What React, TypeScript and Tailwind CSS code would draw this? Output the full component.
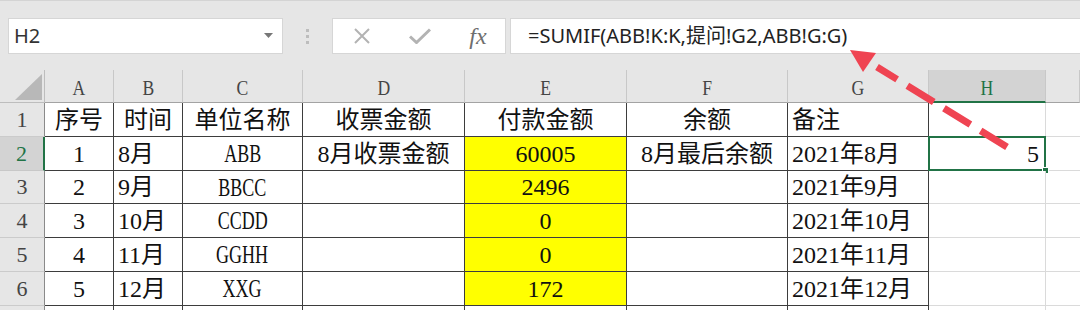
import React from 'react';

const colWidths = 'grid-cols-[45px_69px_69px_120px_162px_162px_161px_141px_117px_1fr]';
const letters = ['A', 'B', 'C', 'D', 'E', 'F', 'G', 'H', ''];

const rows = [
    ['序号', '时间', '单位名称', '收票金额', '付款金额', '余额', '备注'],
    ['1', '8月', 'ABB', '8月收票金额', '60005', '8月最后余额', '2021年8月'],
    ['2', '9月', 'BBCC', '', '2496', '', '2021年9月'],
    ['3', '10月', 'CCDD', '', '0', '', '2021年10月'],
    ['4', '11月', 'GGHH', '', '0', '', '2021年11月'],
    ['5', '12月', 'XXG', '', '172', '', '2021年12月'],
];

// left aligned columns (B, G) except header of B
const alignFor = (row: number, col: number) => {
    if (col === 6) return 'justify-start pl-[4px]';
    if (col === 1 && row > 0) return 'justify-start pl-[4px]';
    return 'justify-center';
};

const CellText = ({ text }: { text: string }) => {
    if (/^[A-Z]+$/.test(text)) {
        return <span className="inline-block scale-x-[0.72] text-[25px]">{text}</span>;
    }
    return <span>{text}</span>;
};

const Toolbar = () => (
    <div className="h-[70px] border-t border-[#d4d4d4] pt-[17px] font-['Noto_Sans','Noto_Sans_CJK_SC',sans-serif]">
        <div className="flex items-start h-[36px]">
            {/* Name box */}
            <div className="ml-[8px] w-[275px] h-[36px] bg-white border border-[#d6d6d6] flex items-center pl-[5px] pr-[9px]">
                <span className="text-[20px] text-[#333] flex-1">H2</span>
                <svg width="9" height="6" viewBox="0 0 9 6">
                    <polygon points="0,0 9,0 4.5,5" fill="#777" />
                </svg>
            </div>

            {/* Divider dots */}
            <div className="w-[49px] h-[36px] flex flex-col items-center justify-center gap-[3px]">
                <div className="w-[3px] h-[3px] bg-[#bdbdbd]" />
                <div className="w-[3px] h-[3px] bg-[#bdbdbd]" />
                <div className="w-[3px] h-[3px] bg-[#bdbdbd]" />
            </div>

            {/* Cancel / enter / fx */}
            <div className="w-[174px] h-[36px] bg-white border border-[#d6d6d6] flex items-center">
                <div className="w-[56px] flex justify-center pl-[1px]">
                    <svg width="18" height="16" viewBox="0 0 18 16">
                        <path d="M2 1 L16 15 M16 1 L2 15" stroke="#b3b3b3" strokeWidth="2" />
                    </svg>
                </div>
                <div className="w-[62px] flex justify-center">
                    <svg width="22" height="16" viewBox="0 0 22 16">
                        <path d="M1 8.5 L7.5 14.5 L21 1.5" stroke="#b3b3b3" strokeWidth="3" fill="none" />
                    </svg>
                </div>
                <div className="flex-1 flex justify-center">
                    <span className="font-['Liberation_Serif',serif] italic text-[24px] text-[#6e6e6e] leading-none">fx</span>
                </div>
            </div>

            {/* Formula input */}
            <div className="ml-[4px] flex-1 h-[36px] bg-white border-y border-l border-[#d6d6d6] flex items-center pl-[17px]">
                <span className="text-[20px] text-[#222] whitespace-nowrap">=SUMIF(ABB!K:K,提问!G2,ABB!G:G)</span>
            </div>
        </div>
    </div>
);

const Sheet = () => (
    <div
        className={`grid ${colWidths} grid-rows-[33px_34px_34px_33px_34px_34px_34px_34px] font-['Liberation_Serif','Noto_Sans_CJK_SC',serif] text-[24px] leading-none text-[#111]`}
    >
        {/* Select-all corner */}
        <div className="border-r border-b border-[#bdbdbd] bg-[#e6e6e6]">
            <svg width="45" height="33" viewBox="0 0 45 33">
                <polygon points="42,4 15,30 42,30" fill="#b8b8b8" />
            </svg>
        </div>

        {/* Column letters */}
        {letters.map((l, i) =>
            l === 'H' ? (
                <div key={i} className="bg-[#d3d3d3] border-r border-[#c8c8c8] border-b-2 border-b-[#217346] flex items-center justify-center pt-[4px] text-[#217346] text-[22px]">
                    <span className="inline-block scale-x-[0.8]">{l}</span>
                </div>
            ) : (
                <div key={i} className="bg-[#e6e6e6] border-r border-b border-r-[#c8c8c8] border-b-[#a3a3a3] flex items-center justify-center pt-[4px] text-[#444] text-[22px]">
                    <span className="inline-block scale-x-[0.8]">{l}</span>
                </div>
            )
        )}

        {[...rows, []].map((row, r) => (
            <React.Fragment key={r}>
                {/* Row number */}
                {r === 1 ? (
                    <div className="bg-[#d3d3d3] border-b border-b-[#c8c8c8] border-r-2 border-r-[#217346] flex items-center justify-center text-[22px] text-[#217346]">
                        {r + 1}
                    </div>
                ) : (
                    <div className="bg-[#e6e6e6] border-b border-r border-b-[#cbcbcb] border-r-[#8a8a8a] flex items-center justify-center text-[22px] text-[#444]">
                        {r < rows.length ? r + 1 : ''}
                    </div>
                )}

                {/* A..G */}
                {Array.from({ length: 7 }).map((_, c) => {
                    const text = row[c] ?? '';
                    const yellow = c === 4 && r >= 1 && r <= 5;
                    const inTable = r <= 5;
                    return (
                        <div
                            key={c}
                            className={`border-r border-b flex items-center whitespace-nowrap overflow-hidden ${
                                inTable ? 'border-[#3d3d3d]' : 'border-r-[#3d3d3d] border-b-[#d9d9d9]'
                            } ${yellow ? 'bg-[#ffff00]' : 'bg-white'} ${alignFor(r, c)}`}
                        >
                            <CellText text={text} />
                        </div>
                    );
                })}

                {/* H */}
                <div className="relative bg-white border-r border-b border-[#dadada] flex items-center justify-end pr-[6px]">
                    {r === 1 && (
                        <>
                            <span>5</span>
                            <div className="absolute -left-px -top-px -right-px -bottom-px border-2 border-[#217346]" />
                            <div className="absolute -right-[4px] -bottom-[4px] w-[7px] h-[7px] bg-[#217346] border border-white" />
                        </>
                    )}
                </div>

                {/* I */}
                <div className="bg-white border-b border-[#dadada]" />
            </React.Fragment>
        ))}
    </div>
);

export default function App() {
    return (
        <div className="relative w-[1080px] h-[310px] overflow-hidden bg-[#e6e6e6]">
            <Toolbar />
            <Sheet />

            {/* Red dashed arrow */}
            <svg className="absolute left-0 top-0 pointer-events-none" width="1080" height="310" viewBox="0 0 1080 310">
                <line x1="1007" y1="147" x2="877" y2="67" stroke="#ef4452" strokeWidth="7" strokeDasharray="31 12" />
                <polygon points="850,50 876,53 863,72" fill="#ef4452" />
            </svg>
        </div>
    );
}
